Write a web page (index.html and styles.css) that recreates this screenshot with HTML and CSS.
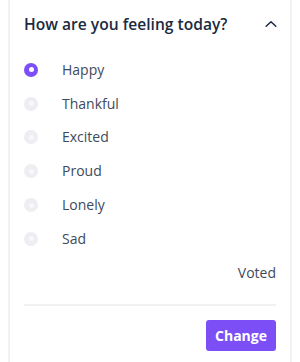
FILE: index.html
```html
<!DOCTYPE html>
<html>
<head>
<meta charset="utf-8">
<link rel="stylesheet" href="styles.css">
</head>
<body>
<div class="card">
  <div class="header">
    <h2 class="title">How are you feeling today?</h2>
    <svg class="chevron" width="12" height="8" viewBox="0 0 12 8"><path d="M1.2 6.3 L6 1.7 L10.8 6.3" fill="none" stroke="#1b2a41" stroke-width="1.5" stroke-linecap="round" stroke-linejoin="round"/></svg>
  </div>
  <ul class="options">
    <li class="option"><span class="radio checked"></span><span class="label">Happy</span></li>
    <li class="option"><span class="radio"></span><span class="label">Thankful</span></li>
    <li class="option"><span class="radio"></span><span class="label">Excited</span></li>
    <li class="option"><span class="radio"></span><span class="label">Proud</span></li>
    <li class="option"><span class="radio"></span><span class="label">Lonely</span></li>
    <li class="option"><span class="radio"></span><span class="label">Sad</span></li>
  </ul>
  <div class="status">Voted</div>
  <hr class="divider">
  <div class="actions"><button class="btn">Change</button></div>
</div>
</body>
</html>
```
FILE: styles.css
```css
html, body {
  margin: 0;
  padding: 0;
  background: #ffffff;
}
body {
  padding: 0 8px;
  height: 362px;
  overflow: hidden;
  font-family: "Open Sans", "Liberation Sans", sans-serif;
}
.card {
  box-sizing: border-box;
  height: 362px;
  border-left: 2px solid #f1f1f3;
  border-right: 2px solid #f1f1f3;
  padding: 0 14px;
}
.header {
  display: flex;
  align-items: center;
  justify-content: space-between;
  padding-top: 12px;
  height: 24px;
}
.title {
  margin: 0;
  font-size: 15.6px;
  line-height: 24px;
  font-weight: 600;
  color: #1b2a41;
}
.chevron {
  margin-right: -1px;
}
.options {
  list-style: none;
  margin: 17px 0 0;
  padding: 0;
}
.option {
  display: flex;
  align-items: center;
  height: 33.8px;
}
.radio {
  box-sizing: border-box;
  width: 14px;
  height: 14px;
  border-radius: 50%;
  background: #eceef1;
  margin-right: 24px;
  display: flex;
  align-items: center;
  justify-content: center;
}
.radio::after {
  content: "";
  width: 5px;
  height: 5px;
  border-radius: 50%;
  background: #f8f8f9;
}
.radio.checked {
  background: #7b4ff5;
}
.radio.checked::after {
  background: #ffffff;
}
.label {
  font-size: 14px;
  line-height: 20px;
  color: #3d4a5c;
}
.status {
  margin-top: 7px;
  text-align: right;
  font-size: 14px;
  line-height: 20px;
  color: #3d4a5c;
}
.divider {
  margin: 21px 0 0;
  border: 0;
  border-top: 2px solid #f1f1f3;
}
.actions {
  display: flex;
  justify-content: flex-end;
  margin-top: 14px;
}
.btn {
  border: 0;
  border-radius: 3px;
  background: #7b4ff5;
  color: #ffffff;
  font-family: "Open Sans", "Liberation Sans", sans-serif;
  font-weight: 700;
  font-size: 14px;
  height: 31px;
  padding: 0 9px;
}
```
